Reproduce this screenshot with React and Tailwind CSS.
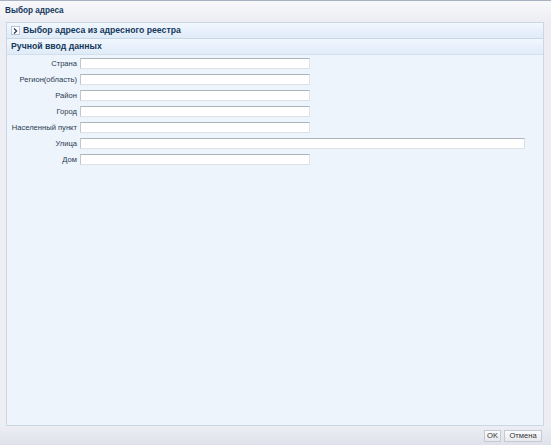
import React from "react";

const fields = [
  { label: "Страна", wide: false },
  { label: "Регион(область)", wide: false },
  { label: "Район", wide: false },
  { label: "Город", wide: false },
  { label: "Населенный пункт", wide: false },
  { label: "Улица", wide: true },
  { label: "Дом", wide: false },
];

function ExpandIcon() {
  return (
    <span className="flex h-[9px] w-[9px] items-center justify-center border border-[#b7c3d4] bg-white">
      <svg width="5" height="6" viewBox="0 0 5 6">
        <path d="M1 0.5 L3.6 3 L1 5.5" fill="none" stroke="#2b3d57" strokeWidth="1.3" />
      </svg>
    </span>
  );
}

export default function App() {
  return (
    <div
      className="flex h-[445px] w-[551px] flex-col overflow-hidden border-t border-[#a9b2c2] bg-[#eceef4] text-[#16365a]"
      style={{ fontFamily: '"Liberation Sans", Arial, sans-serif' }}
    >
      {/* window caption */}
      <div className="flex h-[21px] shrink-0 items-center bg-gradient-to-b from-[#f8f8fb] to-[#eceef3] px-[5px]">
        <span className="text-[8.2px] font-bold text-[#15385c]">Выбор адреса</span>
      </div>

      <div className="flex min-h-0 flex-1 bg-[#eceef4] pl-[6px] pr-[7px]">
        <div className="flex min-w-0 flex-1 flex-col border border-[#cdd6e3] bg-[#eef4fc]">
          {/* collapsed section */}
          <div className="flex h-[16px] items-center gap-[3px] border-b border-[#c9d6e3] bg-gradient-to-b from-[#f1f7fe] to-[#dfebf8] pl-[4px]">
            <ExpandIcon />
            <span className="text-[8.7px] font-bold text-[#15385c]">Выбор адреса из адресного реестра</span>
          </div>
          {/* expanded section */}
          <div className="flex h-[16px] items-center border-b border-[#d3dfec] bg-gradient-to-b from-[#f1f7fe] to-[#dfebf8] pl-[4px]">
            <span className="text-[8.7px] font-bold text-[#15385c]">Ручной ввод данных</span>
          </div>

          <div className="flex flex-1 flex-col gap-[5px] pt-[3px]">
            {fields.map((f) => (
              <div key={f.label} className="flex h-[11px] items-center">
                <span className="w-[73px] whitespace-nowrap pr-[3px] text-right text-[7.6px] leading-none text-[#2a3a50]">
                  {f.label}
                </span>
                <input
                  type="text"
                  className={`h-[11px] border border-t-[#aeb4bd] border-r-[#dde2e8] border-b-[#dde2e8] border-l-[#c3c8cf] bg-white outline-none ${
                    f.wide ? "w-[445px]" : "w-[230px]"
                  }`}
                />
              </div>
            ))}
          </div>
        </div>
      </div>

      {/* dialog buttons */}
      <div className="flex h-[19px] shrink-0 items-center justify-end gap-[3px] bg-gradient-to-b from-[#eceef4] to-[#dfe2ea] pr-[9px]">
        <button className="flex h-[12px] w-[17px] items-center justify-center border border-[#c4c9d2] bg-gradient-to-b from-[#fbfbfd] to-[#e7e9ee] text-[7.6px] leading-none text-[#333]">
          OK
        </button>
        <button className="flex h-[12px] w-[38px] items-center justify-center border border-[#c4c9d2] bg-gradient-to-b from-[#fbfbfd] to-[#e7e9ee] text-[7.6px] leading-none text-[#333]">
          Отмена
        </button>
      </div>
    </div>
  );
}
